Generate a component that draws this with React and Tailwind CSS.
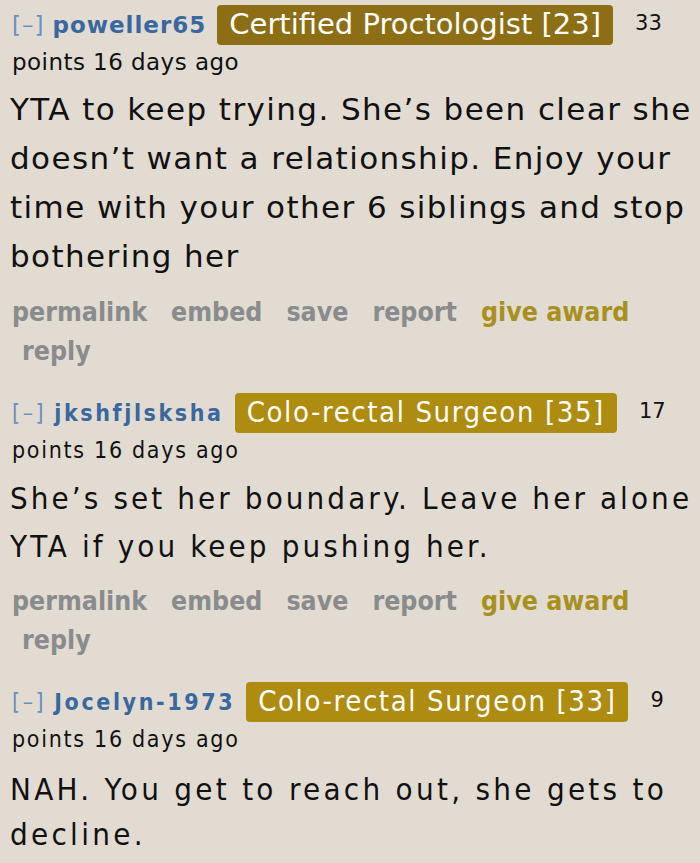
import React from 'react';

const comments = [
  {
    user: 'poweller65',
    flair: 'Certified Proctologist [23]',
    flairBg: 'bg-[#8c6f14]',
    points: '33',
    stretch: '',
    userTrack: 'tracking-[1px]',
    flairTrack: '',
    pointsTrack: 'tracking-[0.45px]',
    bodyTrack: 'tracking-[1.4px]',
    body: 'YTA to keep trying. She’s been clear she doesn’t want a relationship. Enjoy your time with your other 6 siblings and stop bothering her',
    bodyLeading: 'leading-[49px]',
    bodyMt: 'mt-[11px]',
    actionsMt: 'mt-[11px]',
    actions: true,
  },
  {
    user: 'jkshfjlsksha',
    flair: 'Colo-rectal Surgeon [35]',
    flairBg: 'bg-[#ad8c10]',
    points: '17',
    stretch: '[font-stretch:condensed]',
    userTrack: 'tracking-[2.6px]',
    flairTrack: 'tracking-[1.6px]',
    pointsTrack: 'tracking-[1.7px]',
    bodyTrack: 'tracking-[3.1px]',
    body: 'She’s set her boundary. Leave her alone YTA if you keep pushing her.',
    bodyLeading: 'leading-[48px]',
    bodyMt: 'mt-[12px]',
    actionsMt: 'mt-[11px]',
    actions: true,
  },
  {
    user: 'Jocelyn-1973',
    flair: 'Colo-rectal Surgeon [33]',
    flairBg: 'bg-[#ad8c10]',
    points: '9',
    stretch: '[font-stretch:condensed]',
    userTrack: 'tracking-[2.6px]',
    flairTrack: 'tracking-[1.6px]',
    pointsTrack: 'tracking-[1.7px]',
    bodyTrack: 'tracking-[3.3px]',
    body: 'NAH. You get to reach out, she gets to decline.',
    bodyLeading: 'leading-[45px]',
    bodyMt: 'mt-[16px]',
    actionsMt: '',
    actions: false,
  },
];

const Comment = ({ c, first }) => (
  <div className={first ? 'pt-[5px]' : 'mt-[23px]'}>
    <div className="flex items-center h-[40px] pl-[12px]">
      <span className={`text-[23px] text-[#6b8fc0] ${c.stretch} ${c.userTrack}`}>[–]</span>
      <span className={`ml-[8px] text-[23px] font-bold text-[#39689f] ${c.stretch} ${c.userTrack}`}>
        {c.user}
      </span>
      <span
        className={`ml-[11px] h-[40px] flex items-center px-[12px] rounded-[4px] text-white text-[29px] ${c.flairBg} ${c.stretch} ${c.flairTrack}`}
      >
        {c.flair}
      </span>
      <span className="ml-[22px] self-start pt-[3px] text-[21px] text-[#111]">{c.points}</span>
    </div>
    <div className={`mt-[5px] pl-[12px] text-[23px] leading-[24px] text-[#111] ${c.stretch} ${c.pointsTrack}`}>
      points 16 days ago
    </div>
    <p className={`${c.bodyMt} pl-[10px] text-[31px] ${c.bodyLeading} text-[#111] ${c.stretch} ${c.bodyTrack}`}>
      {c.body}
    </p>
    {c.actions && (
      <div className={`${c.actionsMt} text-[26.5px] font-bold leading-[39px] text-[#8a8b8d] [font-stretch:condensed]`}>
        <div className="flex pl-[12px] gap-[24px]">
          <span>permalink</span>
          <span>embed</span>
          <span>save</span>
          <span>report</span>
          <span className="text-[#a8901f]">give award</span>
        </div>
        <div className="pl-[22px]">reply</div>
      </div>
    )}
  </div>
);

export default function App() {
  return (
    <div
      className="w-[700px] h-[863px] overflow-hidden bg-[#e2dbd2]"
      style={{ fontFamily: '"DejaVu Sans", Verdana, sans-serif' }}
    >
      {comments.map((c, i) => (
        <Comment key={c.user} c={c} first={i === 0} />
      ))}
    </div>
  );
}
